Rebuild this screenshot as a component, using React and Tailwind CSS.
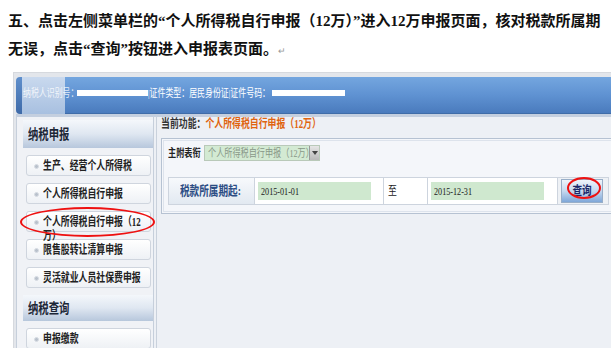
import React from "react";

const squeeze = "inline-block origin-left scale-x-[0.74] whitespace-nowrap";

function MenuItem({label, second}) {
  return (
    <div className="mt-[7px] ml-[9px] w-[125px] h-[21px] rounded-[3px] border border-[#cfd5de] bg-gradient-to-b from-white to-[#eef1f5] flex items-start pt-[3px] pl-[7px] overflow-visible">
      <span className="mt-[5px] w-[5px] h-[5px] rounded-full bg-[#b9c1cc] border border-[#d7dce3] shrink-0" />
      <div className="ml-[4px] text-[12px] leading-[14px] font-bold text-[#222]">
        <span className={squeeze}>{label}</span>
        {second && (
          <>
            <br />
            <span className={squeeze}>{second}</span>
          </>
        )}
      </div>
    </div>
  );
}

function SideHeader({title, first}) {
  return (
    <div
      className={`${first ? "mt-[3px] h-[28px]" : "mt-[7px] h-[26px]"} ml-[6px] w-[130px] bg-gradient-to-b from-[#f4f7fb] via-[#dfe7f1] to-[#b7c7dc] flex items-center pl-[5px] text-[14px] font-bold text-[#1c2636]`}>
      <span className={squeeze}>{title}</span>
    </div>
  );
}

export default function App() {
  return (
    <div className="relative w-[611px] h-[348px] overflow-hidden bg-white font-['Liberation_Serif','Noto_Sans_CJK_SC',serif]">
      {/* instruction text */}
      <div className="pl-2 pt-[7px] text-[15px] leading-[28px] font-bold text-[#111] tracking-[0px] whitespace-nowrap">
        <p>五、点击左侧菜单栏的“个人所得税自行申报（12万）”进入12万申报页面，核对税款所属期</p>
        <p>
          无误，点击“查询”按钮进入申报表页面。
          <span className="text-[9px] font-normal text-[#999]">↵</span>
        </p>
      </div>

      {/* screenshot */}
      <div className="mt-[7px] ml-[13px] h-[278px] border-l border-t border-[#d6d9de] bg-[#e3e6eb] pt-[4px] pl-[2px] flex flex-col">
        {/* blue bar */}
        <div className="h-[37px] flex items-stretch">
          <div className="w-[6px] rounded-l-[4px] bg-gradient-to-b from-[#5f8fcc] to-[#3e6aa8]" />
          <div className="w-[43px] bg-gradient-to-b from-[#c9d9ee] to-[#a8c0e0]" />
          <div className="flex-1 bg-gradient-to-b from-[#74a6df] via-[#5f92d2] to-[#4a7bbd] border-b border-[#3f6ca8]" />
        </div>
        <div className="h-[3px] bg-[#c4cfdf]" />

        {/* content */}
        <div className="flex-1 flex bg-[#edf0f5]">
          {/* sidebar */}
          <div className="w-[139px] border-l border-r border-[#c6cfdb] bg-[#f0f2f6]">
            <SideHeader title="纳税申报" first />
            <MenuItem label="生产、经营个人所得税" />
            <MenuItem label="个人所得税自行申报" />
            <MenuItem label="个人所得税自行申报（12" second="万）" />
            <MenuItem label="限售股转让清算申报" />
            <MenuItem label="灵活就业人员社保费申报" />
            <SideHeader title="纳税查询" />
            <MenuItem label="申报缴款" />
          </div>

          {/* main */}
          <div className="flex-1 ml-[2px] border-l border-[#c9d1dc] pl-[4px]">
            <div className="h-[14px] text-[12px] leading-[14px] font-bold">
              <span className={squeeze}>
                <span className="text-[#333]">当前功能：</span>
                <span className="text-[#e0640f]">个人所得税自行申报（12万）</span>
              </span>
            </div>
            <div className="mt-[7px] h-[76px] border border-[#b6c2d2] bg-[#f4f6fa] p-[1px]">
              <div className="h-full border border-[#dde3ec] px-[4px]">
                {/* select row */}
                <div className="mt-[4px] h-[16px] flex items-center">
                  <span className="w-[36px] text-[11px] font-bold text-[#222]">
                    <span className={squeeze}>主附表衔</span>
                  </span>
                  <div className="flex h-[16px] border border-[#b9c9b9]">
                    <div className="w-[104px] bg-[#d3ead3] text-[11px] leading-[14px] pl-[3px] text-[#889888]">
                      <span className={squeeze}>个人所得税自行申报（12万）</span>
                    </div>
                    <div className="w-[10px] bg-gradient-to-b from-[#e6e6e6] to-[#b9b9b9] border-l border-[#999] flex items-center justify-center">
                      <span className="w-0 h-0 border-l-[3px] border-r-[3px] border-t-[4px] border-l-transparent border-r-transparent border-t-[#444]" />
                    </div>
                  </div>
                </div>

                {/* date row */}
                <div className="mt-[16px] w-[441px] h-[28px] flex border border-[#cdd4de] bg-white">
                  <div className="w-[86px] bg-gradient-to-b from-[#f7f9fc] to-[#e2e9f1] border-r border-[#cdd4de] flex items-center pl-[11px] text-[13px] font-bold text-[#2c4d84]">
                    <span className={squeeze}>税款所属期起:</span>
                  </div>
                  <div className="w-[129px] border-r border-[#cdd4de] flex items-center pl-[3px]">
                    <div className="w-[113px] h-[18px] bg-[#cfe8cf] text-[11px] leading-[18px] pl-[3px] text-[#222]">
                      <span className={squeeze}>2015-01-01</span>
                    </div>
                  </div>
                  <div className="w-[44px] border-r border-[#cdd4de] flex items-center pl-[4px] text-[12px] text-[#222]">
                    <span className={squeeze}>至</span>
                  </div>
                  <div className="w-[130px] border-r border-[#cdd4de] flex items-center pl-[3px]">
                    <div className="w-[113px] h-[18px] bg-[#cfe8cf] text-[11px] leading-[18px] pl-[3px] text-[#222]">
                      <span className={squeeze}>2015-12-31</span>
                    </div>
                  </div>
                  <div className="flex-1 bg-[#eef1f5] flex items-center pl-[3px]">
                    <button className="w-[42px] h-[24px] border border-[#98aec8] bg-gradient-to-b from-[#eef4fb] via-[#c6d9ef] to-[#7fa7d8] text-[12px] font-bold text-[#1b2868] flex items-center justify-center">
                      <span className="inline-block scale-x-[0.8]">查询</span>
                    </button>
                  </div>
                </div>
              </div>
            </div>
          </div>
        </div>
      </div>

      {/* header bar texts over the blue bar */}
      <div className="absolute left-[23px] top-[87px] h-[12px] flex items-center text-[11px] leading-[12px] text-white">
        <span className="inline-block origin-left scale-x-[0.72] whitespace-nowrap w-[54px] opacity-80">纳税人识别号：</span>
        <span className="w-[71px] h-[6px] bg-white" />
        <span className="inline-block origin-left scale-x-[0.72] whitespace-nowrap w-[124px]">|证件类型：居民身份证|证件号码：</span>
        <span className="w-[73px] h-[6px] bg-white" />
      </div>

      {/* red annotation ellipses */}
      <div className="absolute left-[20px] top-[207px] w-[135px] h-[30px] rounded-[50%] border-2 border-[#e11]" />
      <div className="absolute left-[567px] top-[177px] w-[34px] h-[22px] rounded-[50%] border-2 border-[#e11]" />
    </div>
  );
}
